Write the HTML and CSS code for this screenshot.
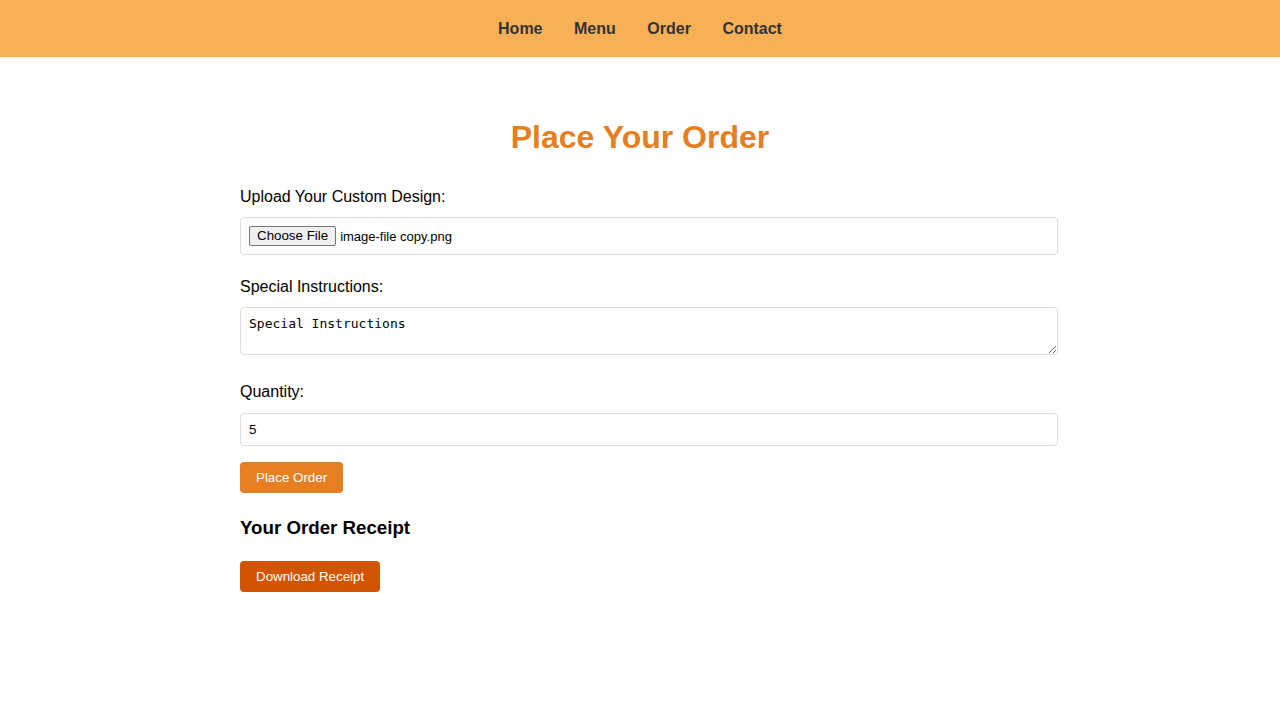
FILE: index.html
```html
<!DOCTYPE html>
<html lang="en">
<head>
<meta charset="utf-8">
<title>Place Your Order</title>
<link rel="stylesheet" href="styles.css">
</head>
<body>
<nav class="topnav">
  <a href="#" class="nav-link">Home</a>
  <a href="#" class="nav-link">Menu</a>
  <a href="#" class="nav-link">Order</a>
  <a href="#" class="nav-link">Contact</a>
</nav>
<main class="container">
  <h1 class="title">Place Your Order</h1>
  <form class="order-form">
    <label class="field-label">Upload Your Custom Design:</label>
    <div class="field file-field">
      <span class="file-btn">Choose File</span>
      <span class="file-name">image-file copy.png</span>
    </div>
    <label class="field-label">Special Instructions:</label>
    <textarea class="field textarea-field">Special Instructions</textarea>
    <label class="field-label">Quantity:</label>
    <input class="field qty-field" type="text" value="5">
    <button type="button" class="btn btn-order">Place Order</button>
  </form>
  <h3 class="receipt-title">Your Order Receipt</h3>
  <button type="button" class="btn btn-download">Download Receipt</button>
</main>
</body>
</html>
```
FILE: styles.css
```css
* { box-sizing: border-box; }
html, body { margin: 0; padding: 0; background: #fff; }
body {
  font-family: "Liberation Sans", Arial, sans-serif;
  color: #000;
}
.topnav {
  height: 57px;
  background: #f8b057;
  display: flex;
  justify-content: center;
  align-items: center;
  gap: 31.5px;
  box-shadow: 0 1px 2px rgba(0,0,0,0.06);
}
.nav-link {
  color: #333;
  font-weight: bold;
  font-size: 16px;
  text-decoration: none;
}
.container {
  width: 800px;
  margin: 0 auto;
  padding-top: 61px;
}
.title {
  margin: 0;
  height: 37px;
  line-height: 38px;
  text-align: center;
  color: #e67e22;
  font-size: 32px;
  font-weight: bold;
}
.order-form {
  display: flex;
  flex-direction: column;
  align-items: flex-start;
  margin-top: 32px;
}
.field-label {
  display: block;
  font-size: 16px;
  line-height: 20px;
  height: 18px;
  margin-bottom: 12px;
}
.field {
  display: block;
  width: 818px;
  border: 1px solid #ddd;
  border-radius: 4px;
  background: #fff;
  margin: 0;
}
.file-field {
  height: 38px;
  padding: 0 8px;
  display: flex;
  align-items: center;
  gap: 4px;
  margin-bottom: 22px;
  font-size: 13px;
}
.file-btn {
  display: inline-block;
  font-family: "Liberation Sans", Arial, sans-serif;
  font-size: 13.33px;
  line-height: 16px;
  padding: 1px 7px;
  border: 1px solid #767676;
  border-radius: 2px;
  background: #efefef;
  color: #000;
}
.file-name { color: #000; }
.textarea-field {
  height: 48px;
  padding: 8px;
  font-family: "DejaVu Sans Mono", "Liberation Mono", monospace;
  font-size: 13px;
  color: #000;
  resize: vertical;
  margin-bottom: 27px;
}
.qty-field {
  height: 33px;
  padding: 8px;
  font-family: "Liberation Sans", Arial, sans-serif;
  font-size: 13.33px;
  color: #000;
  margin-top: 1px;
  margin-bottom: 16px;
}
.btn {
  display: block;
  border: none;
  border-radius: 4px;
  color: #fff;
  font-family: "Liberation Sans", Arial, sans-serif;
  font-size: 13.33px;
  height: 31px;
  padding: 0 16px;
  cursor: pointer;
}
.btn-order { background: #e67e22; }
.btn-download { background: #d35400; }
.receipt-title {
  margin: 24px 0 22px;
  font-size: 18.72px;
  line-height: 22px;
  font-weight: bold;
}
```
